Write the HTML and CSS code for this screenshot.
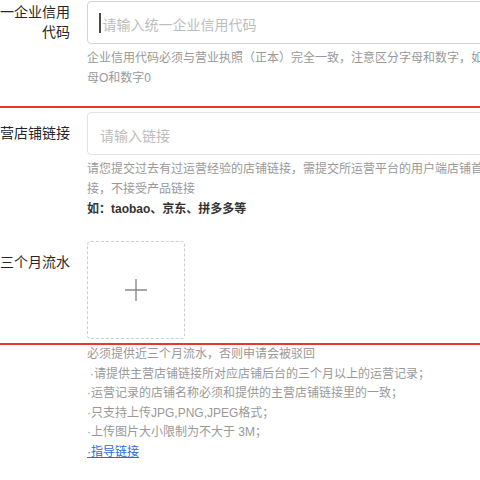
FILE: index.html
```html
<!DOCTYPE html>
<html lang="zh-CN">
<head>
<meta charset="utf-8">
<title>表单</title>
<link rel="stylesheet" href="styles.css">
</head>
<body>
<div class="page">
  <div class="row row-first">
    <div class="label label-first">一企业信用<br>代码</div>
    <div class="field">
      <div class="input input-first"><span class="caret"></span><span>请输入统一企业信用代码</span></div>
      <div class="help">企业信用代码必须与营业执照（正本）完全一致，注意区分字母和数字，如：字母O和数字0</div>
    </div>
  </div>
  <div class="highlight">
    <div class="row row-link">
      <div class="label label-link">营店铺链接</div>
      <div class="field">
        <div class="input input-link"><span>请输入链接</span></div>
        <div class="help">请您提交过去有过运营经验的店铺链接，需提交所运营平台的用户端店铺首页链接，不接受产品链接<div class="help-strong">如：taobao、京东、拼多多等</div></div>
      </div>
    </div>
    <div class="row row-upload">
      <div class="label label-upload">三个月流水</div>
      <div class="upload">
        <svg class="plus" width="22" height="22" viewBox="0 0 22 22"><path d="M11 0V22M0 11H22" stroke="#8a8a8a" stroke-width="1.4" fill="none"/></svg>
      </div>
    </div>
  </div>
  <div class="notes">
    <div>必须提供近三个月流水，否则申请会被驳回</div>
    <div class="note-indent">·请提供主营店铺链接所对应店铺后台的三个月以上的运营记录；</div>
    <div>·运营记录的店铺名称必须和提供的主营店铺链接里的一致；</div>
    <div>·只支持上传JPG,PNG,JPEG格式；</div>
    <div>·上传图片大小限制为不大于 3M；</div>
    <div><a class="link" href="#">·指导链接</a></div>
  </div>
</div>
</body>
</html>
```

FILE: styles.css
```css
html, body {
  margin: 0;
  padding: 0;
  background: #ffffff;
  overflow: hidden;
}

.page {
  width: 480px;
  height: 480px;
  overflow: hidden;
  font-family: "Liberation Sans", "Noto Sans CJK SC", sans-serif;
  color: #333333;
}

.row {
  display: flex;
  align-items: flex-start;
}

.row-first {
  padding-bottom: 18px;
}

.label {
  flex: 0 0 70px;
  width: 70px;
  margin-right: 17px;
  text-align: right;
  font-size: 14px;
  line-height: 20px;
  color: #262626;
  white-space: nowrap;
}

.label-first {
  padding-top: 2px;
}

.label-link {
  padding-top: 15px;
}

.label-upload {
  padding-top: 11px;
}

.field {
  flex: 0 0 420px;
  width: 420px;
}

.input {
  box-sizing: border-box;
  height: 43px;
  border: 1px solid #d3d3d3;
  border-radius: 4px;
  display: flex;
  align-items: center;
  padding: 2px 0 0 11px;
  font-size: 14px;
  color: #bdbdbd;
  white-space: nowrap;
}

.input-first {
  margin-top: 1px;
}

.input-link {
  margin-top: 4px;
  border-color: #e3e3e3;
  padding-left: 12px;
}

.caret {
  display: block;
  width: 1.5px;
  height: 20px;
  margin: -2px 2px 0 0;
  background: #4a4a4a;
}

.help {
  margin-top: 4px;
  font-size: 12px;
  line-height: 20px;
  color: #999999;
}

.help-strong {
  color: #333333;
  font-weight: bold;
}

.highlight {
  border-top: 2px solid #e8372c;
  border-bottom: 2px solid #e8372c;
}

.row-upload {
  margin-top: 22px;
  padding-bottom: 4px;
}

.upload {
  box-sizing: border-box;
  width: 98px;
  height: 98px;
  border: 1px dashed #cfcfcf;
  border-radius: 4px;
  display: flex;
  align-items: center;
  justify-content: center;
}

.plus {
  display: block;
}

.notes {
  margin: 0 0 0 87px;
  font-size: 12px;
  line-height: 19.5px;
  color: #999999;
  white-space: nowrap;
}

.note-indent {
  padding-left: 3px;
}

.link {
  color: #2d6ad8;
  text-decoration: underline;
}
```
